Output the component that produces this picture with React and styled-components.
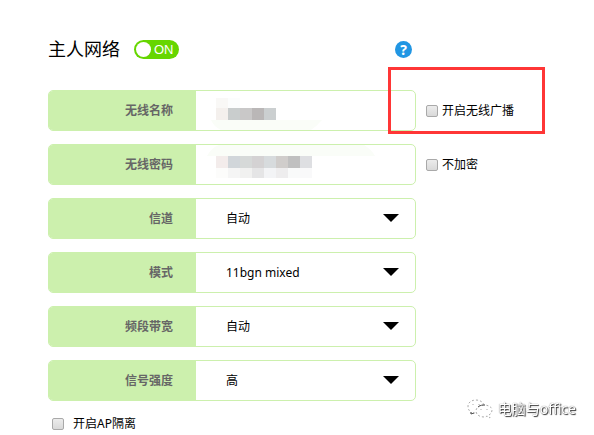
import React from "react";
import styled, { createGlobalStyle } from "styled-components";

const selects = [
    { id: "channel", label: "信道", options: ["自动", "1", "6", "11"] },
    { id: "mode", label: "模式", options: ["11bgn mixed", "11bg mixed", "11n only"] },
    { id: "bandwidth", label: "频段带宽", options: ["自动", "20M", "40M"] },
    { id: "strength", label: "信号强度", options: ["高", "中", "低"] },
];

const nameMask = [
    { y: 7, height: 10, colors: ["#f9f8f6", "#fcfdfd"] },
    { y: 17, height: 12, colors: ["#f4f0ed", "#c9cdcd", "#c9c8c8", "#bab7b7", "#cbcfd0"] },
];

const passwordMask = [
    { y: 11, height: 12, colors: ["#f3eceb", "#d1d6da", "#d6d9d8", "#d4d2d3", "#d7dbdd", "#d0cdcb", "#c0c0c0", "#dedfe2"] },
    { y: 23, height: 10, colors: ["#fcfcfb", "#f5f5f5", "#f1f1f0", "#e5e5e6", "#f3f4f6", "#eeedee", "#f9fafa", "#f9f9fa"] },
];

const Mosaic = ({ rows, shade }) => (
    <MosaicSvg width="180" height="39" viewBox="0 0 180 39" aria-hidden="true">
        <path d={shade} fill="#fafdf8" />
        {rows.map((row) =>
            row.colors.map((color, idx) => (
                <rect key={`${row.y}-${idx}`} x={20 + idx * 12} y={row.y} width="12" height={row.height} fill={color} />
            ))
        )}
    </MosaicSvg>
);

const App = () => {
    const [on, setOn] = React.useState(true);

    return (
        <>
            <GlobalStyle />
            <Page>
                <Header>
                    <Title>主人网络</Title>
                    <Toggle type="button" role="switch" aria-checked={on} $on={on} onClick={() => setOn(!on)}>
                        <Knob />
                        {on ? "ON" : "OFF"}
                    </Toggle>
                    <Help type="button">?</Help>
                </Header>
                <Form>
                    <Row>
                        <Field>
                            <Label htmlFor="ssid">无线名称</Label>
                            <Control>
                                <Input id="ssid" type="text" />
                                <Mosaic rows={nameMask} shade="M15 29H126Q121 35 115 39H25Q18 36 15 29Z" />
                            </Control>
                        </Field>
                        <Check>
                            <Box type="checkbox" />
                            开启无线广播
                        </Check>
                        <Highlight />
                    </Row>
                    <Row>
                        <Field>
                            <Label htmlFor="password">无线密码</Label>
                            <Control>
                                <Input id="password" type="password" />
                                <Mosaic rows={passwordMask} shade="M11 11Q15 3 23 0H168Q175 4 179 11Z" />
                            </Control>
                        </Field>
                        <Check>
                            <Box type="checkbox" />
                            不加密
                        </Check>
                    </Row>
                    {selects.map((item) => (
                        <Row key={item.id}>
                            <Field>
                                <Label htmlFor={item.id}>{item.label}</Label>
                                <Control>
                                    <Select id={item.id}>
                                        {item.options.map((option) => (
                                            <option key={option}>{option}</option>
                                        ))}
                                    </Select>
                                    <Caret viewBox="0 0 16 8" aria-hidden="true">
                                        <path d="M0 0H16L8 8Z" />
                                    </Caret>
                                </Control>
                            </Field>
                        </Row>
                    ))}
                </Form>
                <Footer>
                    <Check $wide>
                        <Box type="checkbox" />
                        开启AP隔离
                    </Check>
                </Footer>
            </Page>
            <Watermark>
                <svg width="26" height="20" viewBox="0 0 26 20" fill="#fff" stroke="#aaa" strokeWidth="1" strokeDasharray="2 2" aria-hidden="true">
                    <path d="M17 6C16 3 13 1 9 1C4 1 1 4 1 7C1 10 2 12 4 13L4 15L7 14H10" />
                    <path d="M17 6C12 6 9 9 9 12C9 16 13 18 17 18C18 18 19 18 20 17L23 19L22 16C24 15 25 13 25 11C25 8 21 6 17 6Z" />
                    <path d="M6 5V6M12 5V6M14 10V11M20 10V11" />
                    <path d="M4 13V15L7 14M11 8C13 6 16 6 18 6" stroke="#555" strokeDasharray="none" fill="none" />
                </svg>
                电脑与office
            </Watermark>
        </>
    );
};

const GlobalStyle = createGlobalStyle`
  * {
    box-sizing: border-box;
  }
  body {
    margin: 0;
    background: #fff;
    color: #000;
    font-family: "Noto Sans", "Noto Sans CJK SC", sans-serif;
    font-size: 12px;
  }
  button, input, select {
    font: inherit;
    color: inherit;
  }
`;
const Page = styled.main`
  padding: 36px 48px 0;
`;
const Header = styled.header`
  display: flex;
  align-items: center;
  max-width: 368px;
  height: 26px;
  padding-right: 4px;
`;
const Title = styled.h1`
  margin: 0 14px 0 0;
  font-size: 18px;
  font-weight: 400;
  line-height: 24px;
`;
const Toggle = styled.button`
  display: flex;
  align-items: center;
  gap: 3px;
  height: 19px;
  padding: 0 5px 0 2px;
  border: none;
  border-radius: 10px;
  background: ${(props) => (props.$on ? "#66d600" : "#bbb")};
  color: #fff;
  font-family: "Liberation Sans", sans-serif;
  font-size: 13px;
`;
const Knob = styled.span`
  width: 15px;
  height: 15px;
  border-radius: 50%;
  background: #fff;
`;
const Help = styled.button`
  width: 17px;
  height: 17px;
  margin-left: auto;
  padding: 0;
  border: none;
  border-radius: 50%;
  background: #2196e3;
  color: #fff;
  font-size: 14px;
  font-weight: 700;
  line-height: 17px;
`;
const Form = styled.form`
  display: flex;
  flex-direction: column;
  gap: 13px;
  margin-top: 28px;
`;
const Row = styled.div`
  position: relative;
  display: flex;
  align-items: center;
  gap: 10px;
`;
const Field = styled.div`
  display: flex;
  flex: 0 1 368px;
  height: 41px;
  border: 1px solid #ccf0ad;
  border-radius: 5px;
  overflow: hidden;
`;
const Label = styled.label`
  flex: 0 0 147px;
  padding-right: 23px;
  background: #ccf0ad;
  color: #666;
  font-weight: 700;
  line-height: 39px;
  text-align: right;
`;
const Control = styled.div`
  position: relative;
  flex: 1;
`;
const Input = styled.input`
  width: 100%;
  height: 100%;
  padding: 0 20px;
  border: none;
  outline: none;
  background: transparent;
`;
const Select = styled.select`
  appearance: none;
  width: 100%;
  height: 100%;
  padding: 0 40px 0 30px;
  border: none;
  outline: none;
  background: transparent;
`;
const Caret = styled.svg`
  position: absolute;
  top: 15px;
  right: 16px;
  width: 16px;
  height: 8px;
  pointer-events: none;
`;
const MosaicSvg = styled.svg`
  position: absolute;
  top: 0;
  left: 0;
  pointer-events: none;
`;
const Check = styled.label`
  display: flex;
  align-items: center;
  gap: ${(props) => (props.$wide ? "9px" : "4px")};
  line-height: 18px;
  white-space: nowrap;
`;
const Box = styled.input`
  appearance: none;
  width: 12px;
  height: 12px;
  margin: 0;
  border: 1px solid #a9a9a9;
  border-radius: 2px;
  background: linear-gradient(#ececec, #d9d9d9);

  &:checked {
    background: #666;
  }
`;
const Highlight = styled.div`
  position: absolute;
  top: -23px;
  left: 340px;
  width: 157px;
  height: 67px;
  border: 3px solid #ff3636;
  pointer-events: none;
`;
const Footer = styled.footer`
  display: flex;
  padding: 14px 4px;
`;
const Watermark = styled.div`
  position: fixed;
  right: 18px;
  bottom: 15px;
  display: flex;
  align-items: center;
  gap: 5px;
  color: #fff;
  font-size: 14px;
  line-height: 22px;
  text-shadow: 1px 1px 1px #333, 0 0 1px #666;
`;

export default App;
